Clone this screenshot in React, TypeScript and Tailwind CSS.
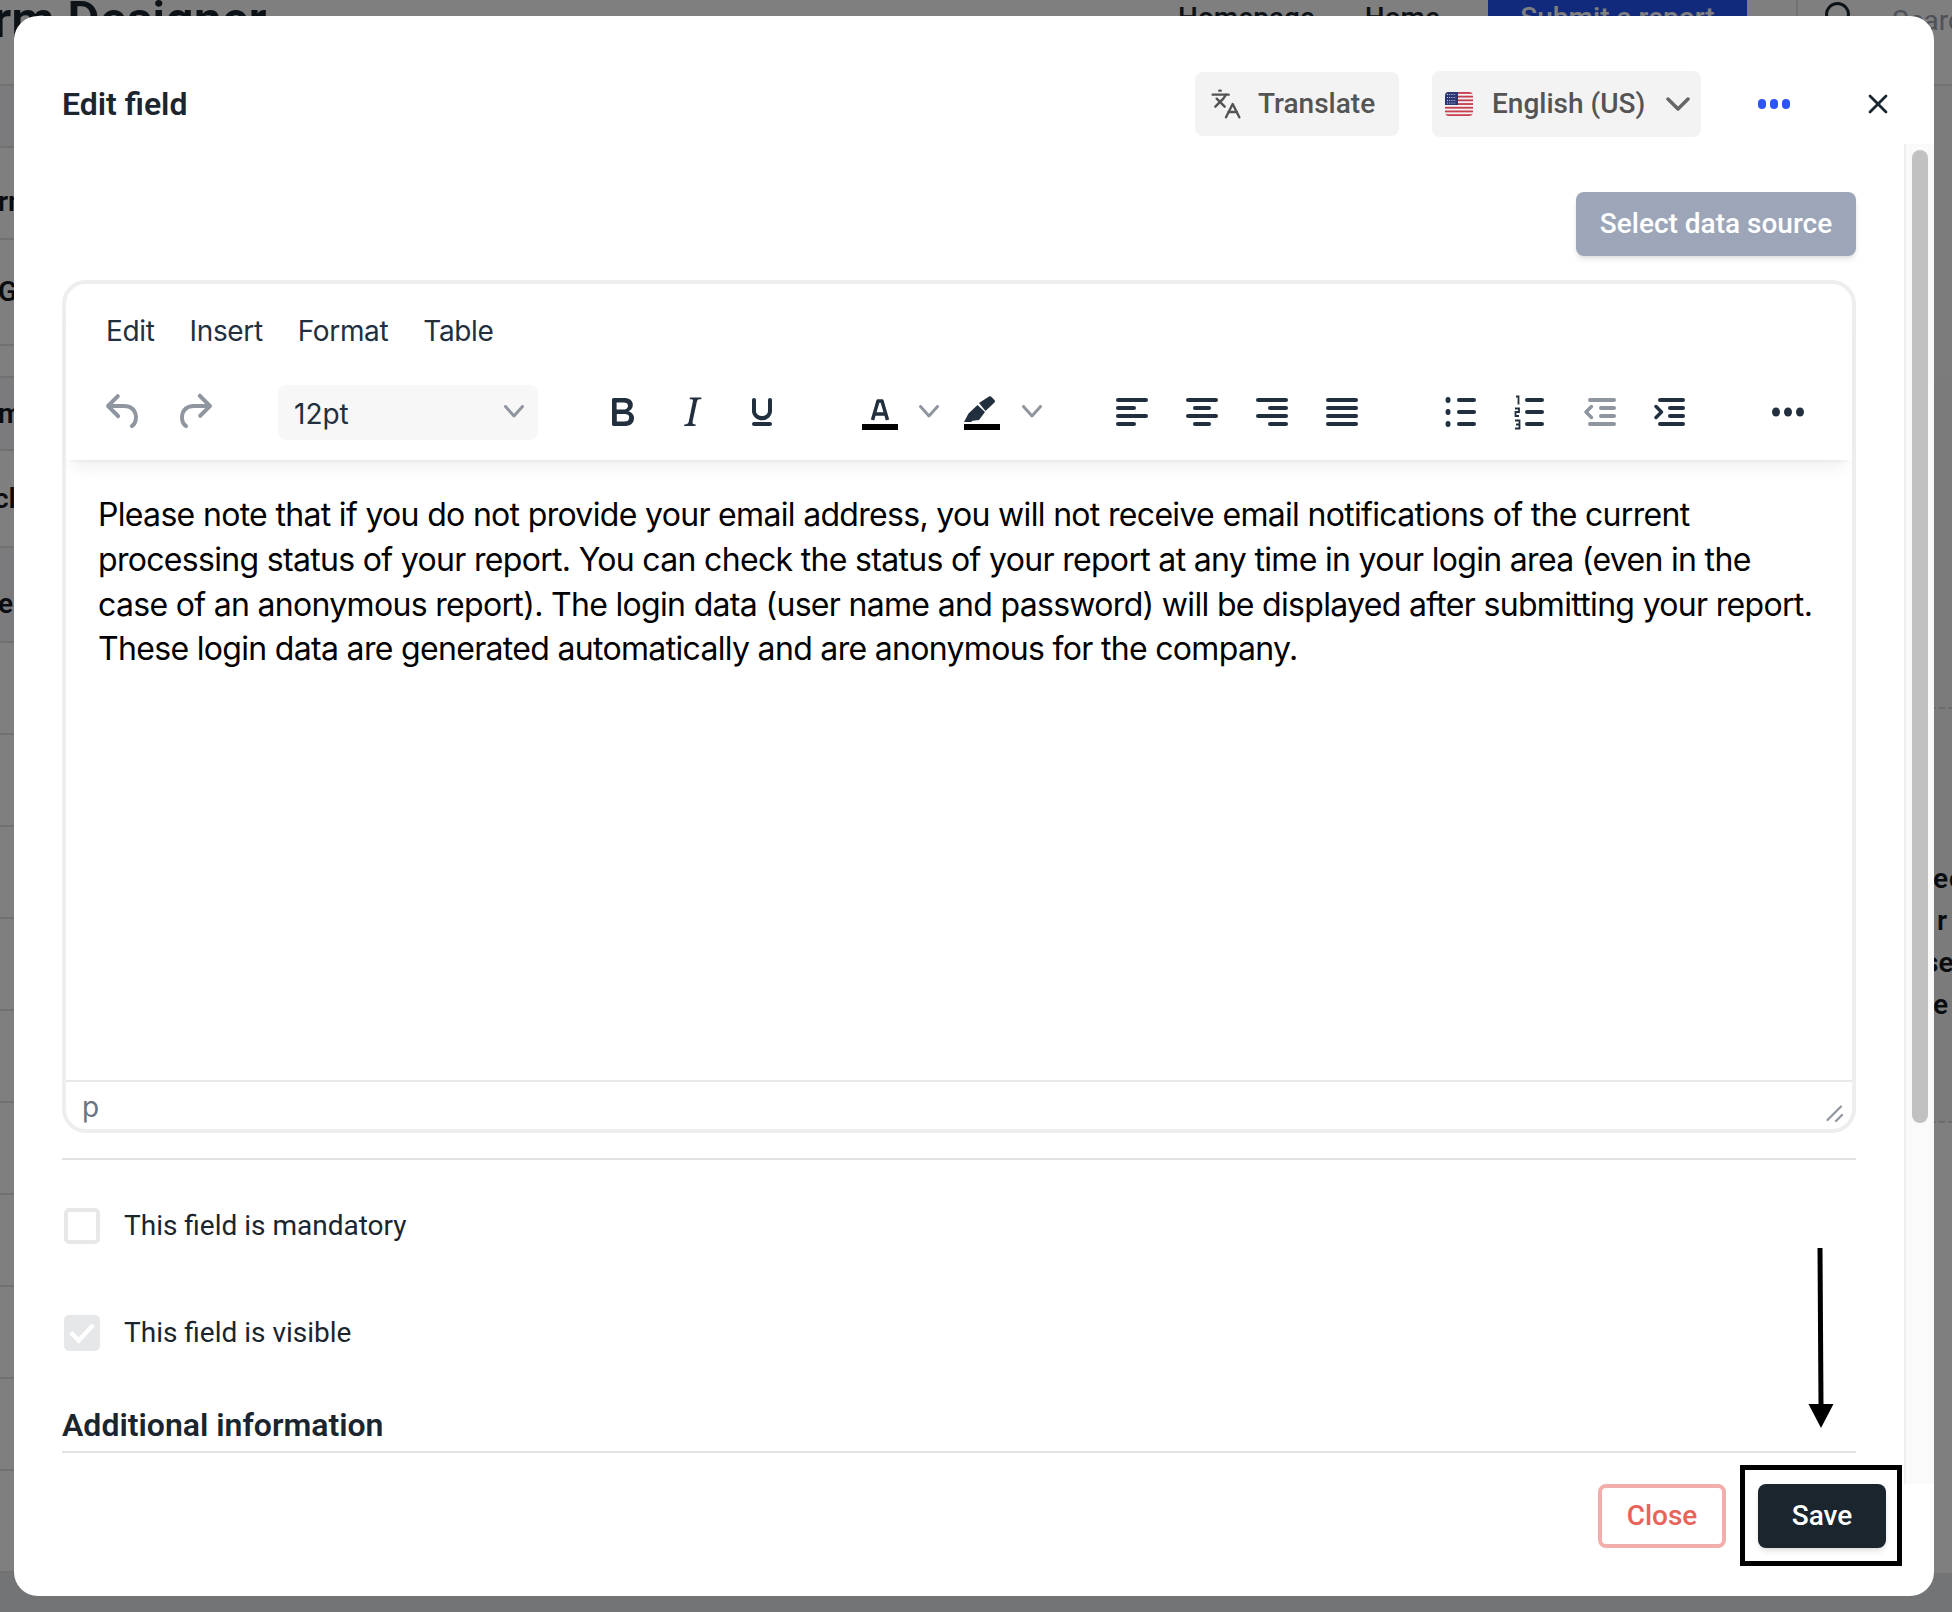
import { Languages } from 'lucide-react';
import type { ReactNode } from 'react';

const DARK = '#222f3e';
const MUTED = '#9096a0';

function Icon({ className = '', children }: { className?: string; children: ReactNode }) {
  return (
    <svg viewBox="0 0 48 48" className={`w-12 h-12 shrink-0 ${className}`} fill="none">
      {children}
    </svg>
  );
}

function Chevron({ className = '' }: { className?: string }) {
  return (
    <svg viewBox="0 0 20 14" className={`w-5 h-3.5 shrink-0 ${className}`} fill="none">
      <path d="M1.5 1.5 10 11l8.5-9.5" stroke={MUTED} strokeWidth="3" strokeLinecap="round" strokeLinejoin="round" />
    </svg>
  );
}

function Lines({ rows, color = DARK }: { rows: [number, number, number][]; color?: string }) {
  return (
    <>
      {rows.map(([x1, x2, y]) => (
        <path key={`${x1}-${y}`} d={`M${x1} ${y}H${x2}`} stroke={color} strokeWidth="4" strokeLinecap="round" />
      ))}
    </>
  );
}

function Toolbar() {
  return (
    <div className="flex items-center h-[56px] pl-[34px]">
      <Icon>
        <path transform="scale(2)" fill={MUTED} d="M6.4 8H12c3.7 0 6.2 2 6.8 5.1.6 2.7-.4 5.6-2.3 6.8a1 1 0 0 1-1-1.8c1.1-.6 1.8-2.7 1.4-4.6-.5-2.1-2.1-3.5-4.9-3.5H6.4l3.3 3.3a1 1 0 1 1-1.4 1.4l-5-5a1 1 0 0 1 0-1.4l5-5a1 1 0 0 1 1.4 1.4L6.4 8Z" />
      </Icon>
      <Icon className="ml-[22px]">
        <path transform="scale(2)" fill={MUTED} d="M17.6 10H12c-2.8 0-4.4 1.4-4.9 3.5-.4 2 .3 4 1.4 4.6a1 1 0 1 1-1 1.8c-2-1.2-2.9-4.1-2.3-6.8.6-3 3-5.1 6.8-5.1h5.6l-3.3-3.3a1 1 0 1 1 1.4-1.4l5 5a1 1 0 0 1 0 1.4l-5 5a1 1 0 0 1-1.4-1.4l3.3-3.3Z" />
      </Icon>

      <div className="ml-[60px] w-[260px] h-[55px] rounded-lg bg-[#f7f7f7] flex items-center justify-between pl-4 pr-[14px]">
        <span className="pt-[3px] text-[28px] text-[#222f3e]">12pt</span>
        <Chevron />
      </div>

      <Icon className="ml-[60px]">
        <path transform="scale(2)" fill={DARK} d="M7.8 19c-.3 0-.5 0-.6-.2l-.2-.5V5.7c0-.2 0-.4.2-.5l.6-.2h5c1.5 0 2.7.3 3.5 1 .7.6 1.1 1.4 1.1 2.5a3 3 0 0 1-.6 1.9c-.4.6-1 1-1.6 1.2.4.1.9.3 1.3.6s.8.7 1 1.2c.4.4.5 1 .5 1.6 0 1.3-.4 2.3-1.3 3-.8.7-2.1 1-3.8 1H7.8Zm5-8.3c.6 0 1.2-.1 1.6-.5.4-.3.6-.7.6-1.3 0-1.1-.8-1.7-2.3-1.7H9.3v3.5h3.4Zm.5 6c.7 0 1.3-.1 1.7-.4.4-.4.6-.9.6-1.5s-.2-1-.7-1.4c-.4-.3-1-.4-2-.4H9.4v3.8h4Z" />
      </Icon>
      <Icon className="ml-[22px]">
        <path transform="scale(2)" fill={DARK} d="M16.7 4.7l-.1.9h-.3c-.6 0-1 0-1.4.3-.3.3-.4.6-.5 1.1l-2.1 9.8v.6c0 .5.4.8 1.4.8h.2l-.2.8H8l.2-.8h.2c1.1 0 1.8-.5 2-1.5l2-9.8.1-.5c0-.6-.4-.8-1.4-.8h-.3l.2-.9h5.8Z" />
      </Icon>
      <Icon className="ml-[22px]">
        <path transform="scale(2)" fill={DARK} d="M16 5c.6 0 1 .4 1 1v5.5a4 4 0 0 1-.4 1.8l-1 1.4a5.3 5.3 0 0 1-5.5 1 5 5 0 0 1-1.6-1c-.5-.4-.8-.9-1.1-1.4a4 4 0 0 1-.4-1.8V6c0-.6.4-1 1-1s1 .4 1 1v5.5c0 .3 0 .6.2 1l.6.7a3.3 3.3 0 0 0 2.2.8 3.4 3.4 0 0 0 2.2-.8c.3-.2.4-.5.6-.8l.2-.9V6c0-.6.4-1 1-1ZM8 17h8c.6 0 1 .4 1 1s-.4 1-1 1H8a1 1 0 0 1 0-2Z" />
      </Icon>

      <Icon className="ml-[70px]">
        <path d="M16.5 32 22 13h4l5.500 19M18.500 26h11" stroke={DARK} strokeWidth="3.500" strokeLinejoin="round" />
        <rect x="6" y="36" width="36" height="6" fill="#000" />
      </Icon>
      <Chevron className="ml-[15px]" />
      <Icon className="ml-[19px]">
        <path fill={DARK} d="M21 15 31 8.500a2 2 0 0 1 2 0l3.500 3.500a2 2 0 0 1 0 2.500L27.500 23ZM19.500 17 27 24l-6 8-6.500.8L13 34H6l4.500-8.500Z" />
        <rect x="6" y="36" width="36" height="6" fill="#000" />
      </Icon>
      <Chevron className="ml-4" />

      <Icon className="ml-[64px]">
        <Lines rows={[[12, 40, 12], [12, 28, 20], [12, 40, 28], [12, 28, 36]]} />
      </Icon>
      <Icon className="ml-[22px]">
        <Lines rows={[[12, 40, 12], [19, 33, 20], [12, 40, 28], [19, 33, 36]]} />
      </Icon>
      <Icon className="ml-[22px]">
        <Lines rows={[[12, 40, 12], [24, 40, 20], [12, 40, 28], [24, 40, 36]]} />
      </Icon>
      <Icon className="ml-[22px]">
        <Lines rows={[[12, 40, 12], [12, 40, 20], [12, 40, 28], [12, 40, 36]]} />
      </Icon>

      <Icon className="ml-[72px]">
        <ellipse cx="12" cy="12" rx="2.500" ry="3" fill={DARK} />
        <ellipse cx="12" cy="24" rx="2.500" ry="3" fill={DARK} />
        <ellipse cx="12" cy="36" rx="2.500" ry="3" fill={DARK} />
        <Lines rows={[[23, 38, 12], [23, 38, 24], [23, 38, 36]]} />
      </Icon>
      <Icon className="ml-[22px]">
        <path d="M10 8.500h2.500v8M9 20.500h4v3.500H9.500v4H13M9 32.500h4.500v8H9M10 36.500h3.500" stroke={DARK} strokeWidth="1.800" />
        <Lines rows={[[21, 36, 12], [21, 36, 24], [21, 36, 36]]} />
      </Icon>
      <Icon className="ml-[21px]">
        <Lines rows={[[15, 39, 12], [26, 39, 20], [26, 39, 28], [15, 39, 36]]} color={MUTED} />
        <path d="M16.500 18.500 11 24l5.500 5.500" stroke={MUTED} strokeWidth="3.500" strokeLinecap="round" strokeLinejoin="round" />
      </Icon>
      <Icon className="ml-[22px]">
        <Lines rows={[[15, 38, 12], [25, 38, 20], [25, 38, 28], [15, 38, 36]]} />
        <path d="M11 18.500 16.500 24 11 29.500" stroke={DARK} strokeWidth="3.500" strokeLinecap="round" strokeLinejoin="round" />
      </Icon>

      <Icon className="ml-[71px]">
        <ellipse cx="12" cy="24" rx="4" ry="4.500" fill={DARK} />
        <ellipse cx="24" cy="24" rx="4" ry="4.500" fill={DARK} />
        <ellipse cx="36" cy="24" rx="4" ry="4.500" fill={DARK} />
      </Icon>
    </div>
  );
}

function Flag() {
  return (
    <svg viewBox="0 0 28 24" className="w-7 h-6 shrink-0">
      <defs>
        <clipPath id="flag-clip">
          <rect width="28" height="24" rx="4" />
        </clipPath>
      </defs>
      <g clipPath="url(#flag-clip)">
        <rect width="28" height="24" fill="#f4f4f4" />
        {[0, 3.7, 7.4, 11.100, 14.800, 18.500, 22.200].map((y) => (
          <rect key={y} y={y} width="28" height="1.850" fill="#c8404f" />
        ))}
        <rect width="13" height="13" fill="#2c3672" />
        <path d="M2 2.500h9M2 5.500h9M2 8.500h9M2 11h9" stroke="#c9cde2" strokeWidth="1" strokeDasharray="1 1.200" />
      </g>
    </svg>
  );
}

// dimmed page that sits behind the dialog
function PageBehind() {
  const rows = [
    { h: 'h-[62px]', bg: 'bg-[#f6f7fa]', text: '', pt: '', ml: '-ml-[2px]' },
    { h: 'h-[92px]', bg: '', text: 'rm', pt: 'pt-[18px]', ml: '-ml-[2px]' },
    { h: 'h-[106px]', bg: '', text: 'General', pt: '', ml: '-ml-[2px]' },
    { h: 'h-[32px]', bg: '', text: '', pt: '', ml: '-ml-[2px]' },
    { h: 'h-[73px]', bg: 'bg-[#f6f7fa]', text: 'mail', pt: '', ml: '-ml-[2px]' },
    { h: 'h-[97px]', bg: '', text: 'class', pt: '', ml: '-ml-[6px]' },
    { h: 'h-[95px]', bg: 'bg-[#f6f7fa]', text: 'e', pt: 'pt-[18px]', ml: '-ml-[2px]' },
    { h: 'h-[92px]', bg: '', text: '', pt: '', ml: '' },
    { h: 'h-[92px]', bg: '', text: '', pt: '', ml: '' },
    { h: 'h-[92px]', bg: '', text: '', pt: '', ml: '' },
    { h: 'h-[92px]', bg: '', text: '', pt: '', ml: '' },
    { h: 'h-[92px]', bg: '', text: '', pt: '', ml: '' },
    { h: 'h-[92px]', bg: '', text: '', pt: '', ml: '' },
    { h: 'h-[92px]', bg: '', text: '', pt: '', ml: '' },
    { h: 'h-[92px]', bg: '', text: '', pt: '', ml: '' },
    { h: 'h-[92px]', bg: '', text: '', pt: '', ml: '' },
    { h: 'h-[102px]', bg: '', text: '', pt: '', ml: '' },
  ];

  return (
    <div className="h-[1612px] bg-white overflow-hidden">
      <div className="h-[86px] flex items-start whitespace-nowrap border-b-2 border-[#e4e4e4]">
        <h1 className="-ml-[62px] -mt-[10px] text-[50px] leading-[60px] font-semibold text-[#1b252e] shrink-0">Form Designer</h1>
        <nav className="ml-auto flex items-start shrink-0">
          <a className="mt-[1px] text-[28px] leading-[34px] font-medium text-[#1b252e]">Homepage</a>
          <a className="ml-[50px] mt-[1px] text-[28px] leading-[34px] font-medium text-[#1b252e]">Home</a>
          <button className="ml-[48px] w-[259px] h-[44px] bg-[#2454f8] text-white text-[28px] leading-[36px] font-medium flex justify-center items-start">Submit a report</button>
          <div className="ml-[49px] w-[2px] h-[54px] bg-[#e4e4e4]" />
          <div className="ml-[27px] mt-[2px] w-[25px] h-[25px] rounded-full border-[3px] border-[#1b252e]" />
          <span className="ml-[42px] mt-[4px] w-[60px] overflow-hidden text-[28px] leading-[34px] text-[#9ca3af]">Search</span>
        </nav>
      </div>
      <div className="flex">
        <div className="w-[1920px] shrink-0">
          {rows.map((row, i) => (
            <div key={i} className={`${row.h} ${row.bg} ${row.pt} border-b-2 border-[#e2e2e2] flex items-center overflow-hidden`}>
              <span className={`${row.ml} text-[28px] font-semibold text-[#14181f]`}>{row.text}</span>
            </div>
          ))}
        </div>
        <div className="flex-1 text-[28px] leading-[42px] font-semibold text-[#14181f] whitespace-nowrap">
          <div className="h-[292px] bg-[#f8f9fb]" />
          <div className="h-[331px] border-b-2 border-dashed border-[#d8d8d8] bg-[#f6f6f6]" />
          <div className="h-[149px] bg-[#f6f6f6]" />
          <div className="bg-[#f6f6f6]">
            <div className="pl-[13px]">
              <span>e</span>
              <span className="ml-[1px]">c</span>
            </div>
            <div className="pl-[17px]">r</div>
            <div className="pl-[4px]">se</div>
            <div className="pl-[13px]">e</div>
          </div>
          <div className="h-[97px] border-b-2 border-dashed border-[#d8d8d8] bg-[#f6f6f6]" />
        </div>
      </div>
      <div className="h-[60px] bg-[#e6e8ec]" />
    </div>
  );
}

export default function App() {
  return (
    <div className="relative w-[1952px] h-[1612px] overflow-hidden font-[Roboto,sans-serif]">
      <PageBehind />
      <div className="absolute inset-0 bg-black/50" />

      <div className="absolute left-[14px] top-[16px] w-[1920px] h-[1580px] bg-white rounded-[24px] flex flex-col overflow-hidden">
        <header className="h-[128px] shrink-0 flex items-start pt-[56px] pl-[48px] pr-[46px] whitespace-nowrap">
          <h2 className="h-[64px] flex items-center text-[32px] font-semibold text-[#1b252e]">Edit field</h2>
          <button className="ml-auto w-[204px] h-[64px] rounded-lg bg-[#f3f3f3] flex items-center pl-[15px] gap-[16px] text-[28px] font-medium text-[#545454]">
            <Languages className="w-[32px] h-[32px]" strokeWidth={1.8} />
            Translate
          </button>
          <button className="ml-[33px] -mt-[1px] w-[269px] h-[66px] rounded-lg bg-[#f3f3f3] flex items-center pl-[13px] gap-[19px] text-[28px] font-medium text-[#545454]">
            <Flag />
            English (US)
            <svg viewBox="0 0 24 14" className="w-6 h-3.5 ml-auto mr-[11px]" fill="none">
              <path d="M2 2l10 10L22 2" stroke="#666" strokeWidth="3.500" strokeLinecap="round" strokeLinejoin="round" />
            </svg>
          </button>
          <div className="ml-[57px] h-[64px] flex items-center gap-[4px]">
            <span className="w-2 h-2.5 rounded-full bg-[#2b55f8]" />
            <span className="w-2 h-2.5 rounded-full bg-[#2b55f8]" />
            <span className="w-2 h-2.5 rounded-full bg-[#2b55f8]" />
          </div>
          <svg viewBox="0 0 20 20" className="ml-[78px] mt-[22px] w-5 h-5" fill="none">
            <path d="M2 2l16 16M18 2 2 18" stroke="#1b252e" strokeWidth="2.800" strokeLinecap="round" />
          </svg>
        </header>

        <div className="flex-1 flex min-h-0">
          <div className="flex-1 min-w-0 pl-[48px] pr-[48px] pt-[48px]">
            <div className="flex justify-end">
              <button className="w-[280px] h-[64px] rounded-lg bg-[#9ca6b8] text-white text-[28px] font-medium shadow-md">
                Select data source
              </button>
            </div>

            <div className="relative mt-[24px] h-[853px] border-4 border-[#eeeeee] rounded-[24px] flex flex-col font-[Inter,sans-serif]">
              <div className="h-[176px] shrink-0 rounded-t-[20px] shadow-[0_4px_4px_-4px_rgba(34,47,62,0.1),0_16px_16px_-8px_rgba(34,47,62,0.07)]">
                <div className="flex gap-[35px] pl-[40px] pt-[26px] h-[100px] text-[28px] leading-[42px] tracking-[-0.35px] text-[#222f3e]">
                  <span>Edit</span>
                  <span>Insert</span>
                  <span>Format</span>
                  <span>Table</span>
                </div>
                <Toolbar />
              </div>
              <div className="flex-1 pl-[32px] pr-[30px] pt-[33px] text-[32px] leading-[44.8px] tracking-[-0.68px] text-black">
                Please note that if you do not provide your email address, you will not receive email notifications of the current processing status of your report. You can check the status of your report at any time in your login area (even in the case of an anonymous report). The login data (user name and password) will be displayed after submitting your report. These login data are generated automatically and are anonymous for the company.
              </div>
              <div className="h-[49px] shrink-0 border-t-2 border-[#e8e8e8] pl-[16px] pt-[2px] flex items-center text-[28px] text-[#6b7280]">
                p
              </div>
              <svg viewBox="0 0 18 18" className="absolute right-[8px] bottom-[6px] w-[18px] h-[18px]" fill="none">
                <path d="M1.500 15 15 1.500M10 16l6-6" stroke={MUTED} strokeWidth="2.200" strokeLinecap="round" />
              </svg>
            </div>

            <div className="mt-[25px] h-[2px] bg-[#e2e2e2]" />

            <label className="mt-[48px] ml-[2px] flex items-center h-[36px] gap-[24px] text-[28px] text-[#1b252e]">
              <span className="w-[36px] h-[36px] rounded-[5px] border-4 border-[#e8e8e8] bg-white" />
              This field is mandatory
            </label>
            <label className="mt-[71px] ml-[2px] flex items-center h-[36px] gap-[24px] text-[28px] text-[#1b252e]">
              <span className="w-[36px] h-[36px] rounded-[5px] bg-[#e6e7e8] flex items-center justify-center">
                <svg viewBox="0 0 24 20" className="w-[26px] h-[22px]" fill="none">
                  <path d="M3 11l6 6L21 4" stroke="#fff" strokeWidth="4" strokeLinecap="square" />
                </svg>
              </span>
              This field is visible
            </label>

            <h3 className="mt-[53px] text-[32px] leading-[42px] font-semibold text-[#1b252e]">Additional information</h3>
            <div className="mt-[5px] h-[2px] bg-[#e2e2e2]" />
          </div>

          <div className="w-[30px] shrink-0 border-l-2 border-[#eeeeee] bg-[#fafafa] pt-[6px] pl-[6px]">
            <div className="w-4 h-[973px] rounded-full bg-[#c1c1c1]" />
          </div>
        </div>

        <footer className="h-[112px] shrink-0 flex justify-end gap-[32px] pr-[48px]">
          <button className="w-[128px] h-[64px] rounded-lg border-4 border-[#f2aeaa] bg-white text-[28px] font-medium text-[#e8635a]">
            Close
          </button>
          <button className="w-[128px] h-[64px] rounded-lg bg-[#1b252e] text-[28px] font-medium text-white shadow-md">
            Save
          </button>
        </footer>

        {/* annotation drawn over the screenshot */}
        <div className="absolute left-[1726px] top-[1449px] w-[162px] h-[101px] border-[5px] border-black" />
        <svg viewBox="0 0 30 184" className="absolute left-[1792px] top-[1232px] w-[30px] h-[184px]" fill="none">
          <path d="M14 0 15 158" stroke="#000" strokeWidth="5" />
          <path d="M2.500 156h25L15 180Z" fill="#000" />
        </svg>
      </div>
    </div>
  );
}
